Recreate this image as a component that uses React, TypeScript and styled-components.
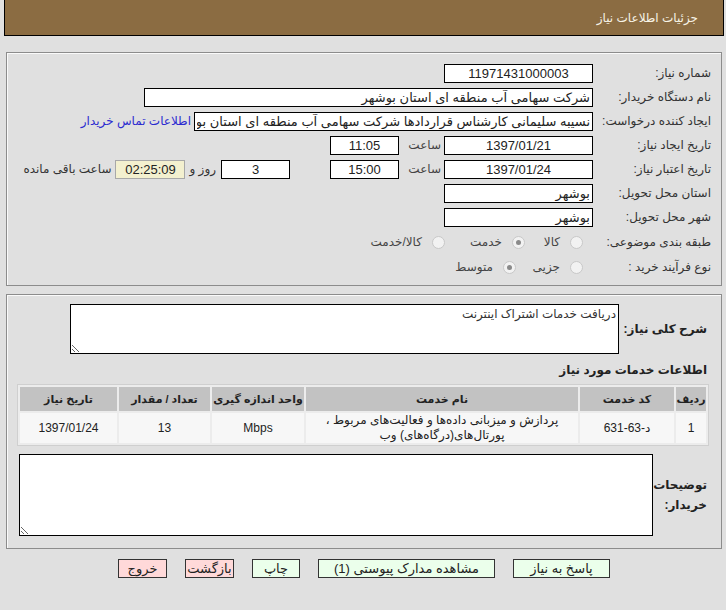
import React from 'react'
import styled, { createGlobalStyle } from 'styled-components'

const GlobalStyle = createGlobalStyle`
  html, body {
    margin: 0;
    background: #e0e0e0;
  }
  body {
    font-family: "Liberation Sans", "DejaVu Sans", sans-serif;
    font-size: 12px;
    color: #333;
  }
`

const Page = styled.div`
  direction: rtl;
  width: 726px;
  padding: 0 2px 0 4px;
  box-sizing: border-box;
`

const Header = styled.div`
  height: 36px;
  background: #8b6c42;
  border: 1px solid #000;
  border-top: none;
  box-sizing: border-box;
  display: flex;
  align-items: center;
  padding-right: 25px;
  color: #f7f3e6;
  font-size: 12px;
`

const Panel = styled.div<{ $top: number }>`
  margin: ${({ $top }) => $top}px 2px 0 2px;
  border: 1px solid #8c8c8c;
  box-shadow: inset 1px 1px 0 #fafafa;
  padding: ${({ $top }) => ($top > 10 ? '8px 10px 6px 10px' : '9px 12px 12px 12px')};
`

const Row = styled.div<{ $h?: number }>`
  display: flex;
  align-items: center;
  height: ${({ $h }) => $h ?? 24}px;
`

const Label = styled.div`
  width: 118px;
  flex: none;
  white-space: nowrap;
  color: #333;
`

const Field = styled.input<{ $w: number; $align?: string }>`
  width: ${({ $w }) => $w}px;
  height: 19px;
  box-sizing: border-box;
  border: 1px solid #000;
  background: #fff;
  padding: 0 2px;
  margin: 0;
  font-family: "Liberation Sans", "DejaVu Sans", sans-serif;
  font-size: 13px;
  color: #222;
  text-align: ${({ $align }) => $align ?? 'center'};
  direction: rtl;
  outline: none;
  flex: none;
`

const Text = styled.span<{ $mr?: number; $ml?: number; $color?: string }>`
  white-space: nowrap;
  margin-right: ${({ $mr }) => $mr ?? 0}px;
  margin-left: ${({ $ml }) => $ml ?? 0}px;
  color: ${({ $color }) => $color ?? '#333'};
`

const TimeLabel = styled.span`
  width: 45px;
  flex: none;
  padding-right: 3px;
  box-sizing: border-box;
  color: #444;
`

const Timer = styled.div`
  width: 70px;
  height: 19px;
  box-sizing: border-box;
  border: 1px solid #a8a8a8;
  background: #f3f0cf;
  display: flex;
  align-items: center;
  justify-content: center;
  font-size: 13px;
  color: #222;
  margin-right: 4px;
  direction: ltr;
`

const Option = styled.label<{ $w: number }>`
  display: flex;
  align-items: center;
  width: ${({ $w }) => $w}px;
  padding-right: 10px;
  box-sizing: border-box;
  flex: none;
  color: #444;
`

const Radio = styled.span<{ $on?: boolean }>`
  width: 13px;
  height: 13px;
  box-sizing: border-box;
  border-radius: 50%;
  border: 1px solid #c8c8c8;
  background: #f2f2f2;
  margin-left: 10px;
  display: flex;
  align-items: center;
  justify-content: center;
  flex: none;
  &::after {
    content: '';
    width: 5px;
    height: 5px;
    border-radius: 50%;
    background: ${({ $on }) => ($on ? '#8a8a8a' : 'transparent')};
  }
`

const DescRow = styled.div`
  display: flex;
  align-items: center;
`

const BoldLabel = styled.div<{ $w: number }>`
  width: ${({ $w }) => $w}px;
  flex: none;
  font-weight: bold;
  font-size: 12px;
  color: #222;
  line-height: 20px;
  white-space: nowrap;
  padding-right: 2px;
  box-sizing: border-box;
`

const Area = styled.textarea<{ $w: number; $h: number }>`
  width: ${({ $w }) => $w}px;
  height: ${({ $h }) => $h}px;
  box-sizing: border-box;
  border: 1px solid #000;
  background: #fff;
  margin: 0;
  padding: 2px;
  font-family: "Liberation Sans", "DejaVu Sans", sans-serif;
  font-size: 12px;
  color: #333;
  direction: rtl;
  outline: none;
`

const SectionTitle = styled.div`
  font-weight: bold;
  font-size: 12px;
  color: #222;
  margin: 9px 2px 7px;
`

const Table = styled.table`
  width: 100%;
  table-layout: fixed;
  border: 1px solid #cfcfcf;
  border-spacing: 2px;
  background: #ececec;
  margin-bottom: 8px;
  th {
    background: #c2c2c2;
    height: 24px;
    padding: 0;
    font-weight: bold;
    color: #222;
    font-size: 11px;
    white-space: nowrap;
    overflow: visible;
  }
  td {
    background: #f7f7f7;
    height: 30px;
    padding: 0 2px;
    text-align: center;
    color: #222;
    font-size: 12px;
    line-height: 15px;
  }
`

const Buttons = styled.div`
  display: flex;
  justify-content: center;
  gap: 18px;
  margin-top: 10px;
`

const Button = styled.button<{ $w: number; $tone: 'green' | 'red' }>`
  width: ${({ $w }) => $w}px;
  height: 19px;
  box-sizing: border-box;
  border: 1px solid #333;
  background: ${({ $tone }) => ($tone === 'green' ? '#ebffeb' : '#ffd9d9')};
  font-family: "Liberation Sans", "DejaVu Sans", sans-serif;
  font-size: 13px;
  color: #222;
  padding: 0;
  direction: rtl;
  white-space: nowrap;
  overflow: visible;
`

const cols = [
  { title: 'ردیف', w: 30 },
  { title: 'کد خدمت', w: 94 },
  { title: 'نام خدمت', w: 272 },
  { title: 'واحد اندازه گیری', w: 92 },
  { title: 'تعداد / مقدار', w: 91 },
  { title: 'تاریخ نیاز', w: 97 }
]

export default function App() {
  return (
    <Page>
      <GlobalStyle />
      <Header>جزئیات اطلاعات نیاز</Header>

      <Panel $top={16}>
        <Row>
          <Label>شماره نیاز:</Label>
          <Field $w={149} readOnly value="11971431000003" />
        </Row>
        <Row>
          <Label>نام دستگاه خریدار:</Label>
          <Field $w={449} $align="right" readOnly value="شرکت سهامی آب منطقه ای استان بوشهر" />
        </Row>
        <Row>
          <Label>ایجاد کننده درخواست:</Label>
          <Field
            $w={399}
            $align="right"
            readOnly
            value="نسیبه سلیمانی کارشناس قراردادها شرکت سهامی آب منطقه ای استان بوشهر"
          />
          <Text $mr={3} $color="#2b2bd0">
            اطلاعات تماس خریدار
          </Text>
        </Row>
        <Row>
          <Label>تاریخ ایجاد نیاز:</Label>
          <Field $w={149} readOnly value="1397/01/21" />
          <TimeLabel>ساعت</TimeLabel>
          <Field $w={69} readOnly value="11:05" />
        </Row>
        <Row>
          <Label>تاریخ اعتبار نیاز:</Label>
          <Field $w={149} readOnly value="1397/01/24" />
          <TimeLabel>ساعت</TimeLabel>
          <Field $w={69} readOnly value="15:00" />
          <Text $mr={40} />
          <Field $w={69} readOnly value="3" />
          <Text $mr={5}>روز و</Text>
          <Timer>02:25:09</Timer>
          <Text $mr={4}>ساعت باقی مانده</Text>
        </Row>
        <Row>
          <Label>استان محل تحویل:</Label>
          <Field $w={149} $align="right" readOnly value="بوشهر" />
        </Row>
        <Row>
          <Label>شهر محل تحویل:</Label>
          <Field $w={149} $align="right" readOnly value="بوشهر" />
        </Row>
        <Row $h={26}>
          <Label>طبقه بندی موضوعی:</Label>
          <Option $w={58}>
            <Radio />
            کالا
          </Option>
          <Option $w={80}>
            <Radio $on />
            خدمت
          </Option>
          <Option $w={90}>
            <Radio />
            کالا/خدمت
          </Option>
        </Row>
        <Row>
          <Label>نوع فرآیند خرید :</Label>
          <Option $w={67}>
            <Radio />
            جزیی
          </Option>
          <Option $w={80}>
            <Radio $on />
            متوسط
          </Option>
        </Row>
      </Panel>

      <Panel $top={8}>
        <DescRow>
          <BoldLabel $w={90}>شرح کلی نیاز:</BoldLabel>
          <Area $w={549} $h={50} readOnly defaultValue="دریافت خدمات اشتراک اینترنت" />
        </DescRow>
        <SectionTitle>اطلاعات خدمات مورد نیاز</SectionTitle>
        <Table>
          <colgroup>
            {cols.map((c) => (
              <col key={c.title} style={{ width: c.w }} />
            ))}
          </colgroup>
          <thead>
            <tr>
              {cols.map((c) => (
                <th key={c.title}>{c.title}</th>
              ))}
            </tr>
          </thead>
          <tbody>
            <tr>
              <td>1</td>
              <td>د-63-631</td>
              <td>
                پردازش و میزبانی داده‌ها و فعالیت‌های مربوط ،
                <br />
                پورتال‌های(درگاه‌های) وب
              </td>
              <td>Mbps</td>
              <td>13</td>
              <td>1397/01/24</td>
            </tr>
          </tbody>
        </Table>
        <DescRow>
          <BoldLabel $w={56}>
            توضیحات
            <br />
            خریدار:
          </BoldLabel>
          <Area $w={635} $h={82} readOnly defaultValue="" />
        </DescRow>
      </Panel>

      <Buttons>
        <Button $w={97} $tone="green">پاسخ به نیاز</Button>
        <Button $w={177} $tone="green">مشاهده مدارک پیوستی (1)</Button>
        <Button $w={48} $tone="green">چاپ</Button>
        <Button $w={49} $tone="red">بازگشت</Button>
        <Button $w={49} $tone="red">خروج</Button>
      </Buttons>
    </Page>
  )
}
